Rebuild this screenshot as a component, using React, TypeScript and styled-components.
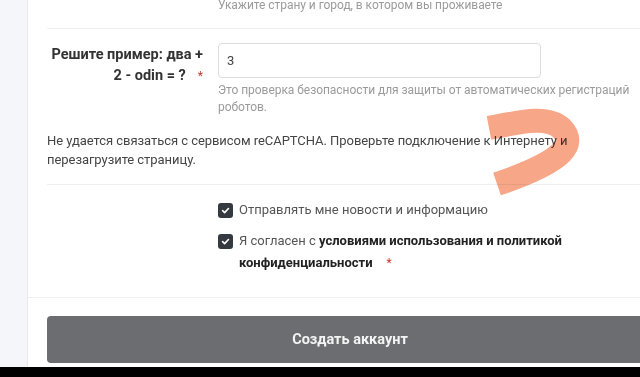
import React from "react";
import styled, { createGlobalStyle } from "styled-components";

const GlobalStyle = createGlobalStyle`
  html, body {
    margin: 0;
    padding: 0;
    background: #000;
  }
  body {
    font-family: Roboto, "Noto Sans", sans-serif;
  }
`;

const Screen = styled.div`
  position: relative;
  width: 640px;
  height: 377px;
  overflow: hidden;
  background: #000;
`;

const Page = styled.div`
  display: flex;
  height: 367px;
  background: #fff;
  overflow: hidden;
`;

const Sidebar = styled.div`
  flex: none;
  width: 27px;
  background: #f5f6fa;
  border-right: 1px solid #e7e8ec;
`;

const Panel = styled.div`
  flex: none;
  width: 644px;
  display: flex;
  flex-direction: column;
`;

const Section = styled.div`
  padding: 0 19px;
`;

const FormRow = styled.div<{ $top?: number }>`
  display: grid;
  grid-template-columns: 156px 1fr;
  column-gap: 15px;
  margin-top: ${(p) => p.$top ?? 0}px;
`;

const Hint = styled.div<{ $top?: number }>`
  margin-top: ${(p) => p.$top ?? 0}px;
  font-size: 12px;
  line-height: 17px;
  color: #9b9b9b;
  letter-spacing: -0.05px;
`;

const Rule = styled.div<{ $top: number }>`
  height: 1px;
  margin-top: ${(p) => p.$top}px;
  background: #eeeff1;
`;

const Label = styled.label`
  padding-top: 1px;
  text-align: right;
  font-size: 14.5px;
  line-height: 21px;
  font-weight: 700;
  color: #333;
`;

const Required = styled.span<{ $gap: number }>`
  margin-left: ${(p) => p.$gap}px;
  color: #c0392b;
  font-weight: 400;
  font-size: 12px;
`;

const Field = styled.div`
  display: flex;
  flex-direction: column;
`;

const Input = styled.input`
  box-sizing: border-box;
  width: 323px;
  height: 35px;
  padding: 0 8px;
  border: 1px solid #dcdde0;
  border-radius: 4px;
  font-family: inherit;
  font-size: 13px;
  color: #444;
  outline: none;
`;

const Notice = styled.p`
  margin: 15px 0 0;
  font-size: 13px;
  line-height: 19px;
  color: #454545;
  letter-spacing: -0.05px;
`;

const Checks = styled.div`
  display: flex;
  flex-direction: column;
  gap: 9px;
`;

const CheckRow = styled.label`
  display: flex;
  align-items: flex-start;
  gap: 6px;
`;

const Box = styled.span`
  flex: none;
  width: 15px;
  height: 15px;
  margin-top: 4px;
  border-radius: 3px;
  background: #343a40;
  display: flex;
  align-items: center;
  justify-content: center;
`;

const CheckText = styled.span`
  font-size: 13px;
  line-height: 22px;
  color: #555;
`;

const Strong = styled.b`
  font-weight: 700;
  color: #222;
`;

const ButtonBar = styled.div`
  padding: 18px 19px 0;
`;

const SubmitButton = styled.button`
  width: 100%;
  height: 47px;
  border: none;
  border-radius: 4px;
  background: #6c6d71;
  color: #f4f4f4;
  font-family: inherit;
  font-size: 14.5px;
  font-weight: 700;
`;

const Scribble = styled.svg`
  position: absolute;
  left: 0;
  top: 0;
  pointer-events: none;
  mix-blend-mode: multiply;
`;

const Tick = () => (
  <svg width="9" height="9" viewBox="0 0 10 10">
    <path d="M1.8 5.2 L4 7.3 L8.3 2.8" fill="none" stroke="#fff" strokeWidth="1.8" strokeLinecap="round" strokeLinejoin="round" />
  </svg>
);

const App = () => {
  return (
    <>
      <GlobalStyle />
      <Screen>
        <Page>
          <Sidebar />
          <Panel>
            <Section>
              <FormRow $top={-3}>
                <span />
                <Hint>Укажите страну и город, в котором вы проживаете</Hint>
              </FormRow>
              <Rule $top={14} />
              <FormRow $top={14}>
                <Label>
                  Решите пример: два +<br />2 - odin = ?<Required $gap={12}>*</Required>
                </Label>
                <Field>
                  <Input defaultValue="3" />
                  <Hint $top={4}>
                    Это проверка безопасности для защиты от автоматических регистраций
                    <br />
                    роботов.
                  </Hint>
                </Field>
              </FormRow>
              <Notice>
                Не удается связаться с сервисом reCAPTCHA. Проверьте подключение к Интернету и
                <br />
                перезагрузите страницу.
              </Notice>
              <Rule $top={15} />
              <FormRow $top={14}>
                <span />
                <Checks>
                  <CheckRow>
                    <Box>
                      <Tick />
                    </Box>
                    <CheckText>Отправлять мне новости и информацию</CheckText>
                  </CheckRow>
                  <CheckRow>
                    <Box>
                      <Tick />
                    </Box>
                    <CheckText>
                      Я согласен с <Strong>условиями использования и политикой</Strong>
                      <br />
                      <Strong>конфиденциальности</Strong>
                      <Required $gap={14}>*</Required>
                    </CheckText>
                  </CheckRow>
                </Checks>
              </FormRow>
            </Section>
            <Rule $top={23} />
            <ButtonBar>
              <SubmitButton>Создать аккаунт</SubmitButton>
            </ButtonBar>
          </Panel>
        </Page>
        <Scribble width="640" height="377" viewBox="0 0 640 377">
          <path
            d="M489 128 C520 122 548 115 562 129 C575 143 568 160 497 184"
            fill="none"
            stroke="#f7a788"
            strokeWidth="24"
          />
        </Scribble>
      </Screen>
    </>
  );
};

export default App;
